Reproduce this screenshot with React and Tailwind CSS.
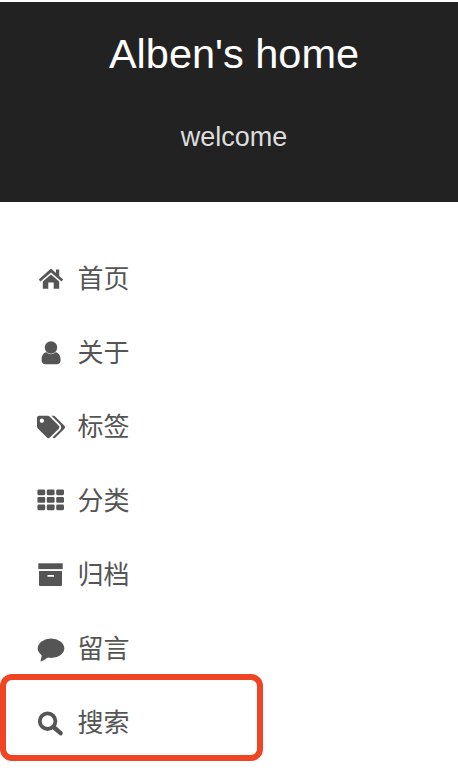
import React from "react";
import { FaTags } from "react-icons/fa";

// font-awesome 4 style icons, drawn in a 40x34 box
const HomeIcon = () => (
  <>
    <path d="M6.8 17.5 L19 6.6 L24 11 V7.6 H27.2 V14 L31.2 17.5 L29.6 19.4 L19 10.4 L8.4 19.4 Z" />
    <path d="M10.8 19.6 L19 12.4 L27.2 19.6 V26.8 H21.7 V20.5 H16.3 V26.8 H10.8 Z" />
  </>
);

const UserIcon = () => (
  <>
    <circle cx="19" cy="11.5" r="6.2" />
    <path d="M9.6 24 C9.6 19.5 11.5 16.8 14.3 16.3 C15.8 17.6 17.3 18.3 19 18.3 C20.7 18.3 22.2 17.6 23.7 16.3 C26.5 16.8 28.6 19.5 28.6 24 C28.6 27 27 28.2 25 28.2 H13.2 C11.2 28.2 9.6 27 9.6 24 Z" />
  </>
);

const ThIcon = () => (
  <>
    {[5.4, 14.8, 24.2].map((x) =>
      [5.4, 13, 20.4].map((y) => (
        <rect key={`${x}-${y}`} x={x} y={y} width="7.8" height="5.8" rx="1.4" />
      ))
    )}
  </>
);

const ArchiveIcon = () => (
  <>
    <rect x="6.3" y="5.3" width="24.4" height="5.8" />
    <path fillRule="evenodd" d="M7 13 H30 V27 Q30 28 29 28 H8 Q7 28 7 27 Z M15.5 17 V18.8 H22 V17 Z" />
  </>
);

const CommentIcon = () => (
  <>
    <ellipse cx="19" cy="16.3" rx="13.3" ry="9.7" />
    <path d="M10 22 L8.5 29.8 Q12.5 28 16.5 25 Z" />
  </>
);

const SearchIcon = () => (
  <>
    <circle cx="15.6" cy="15.2" r="7.8" fill="none" stroke="currentColor" strokeWidth="3.8" />
    <path d="M21.5 21 L28.6 27.2" fill="none" stroke="currentColor" strokeWidth="4.4" strokeLinecap="round" />
  </>
);

const TagsIcon = () => (
  <span className="w-[40px] h-[34px] pl-[5px] flex items-center text-[28px]">
    <FaTags />
  </span>
);

const menu = [
  { label: "首页", icon: <HomeIcon /> },
  { label: "关于", icon: <UserIcon /> },
  { label: "标签", custom: <TagsIcon /> },
  { label: "分类", icon: <ThIcon /> },
  { label: "归档", icon: <ArchiveIcon /> },
  { label: "留言", icon: <CommentIcon /> },
  { label: "搜索", icon: <SearchIcon /> },
];

export default function App() {
  return (
    <div className="relative w-[458px] h-[778px] overflow-hidden bg-white pt-[2px] font-['Liberation_Sans','Noto_Sans_CJK_SC',sans-serif]">
      <header className="h-[200px] bg-[#222222] pl-[10px] flex flex-col items-center">
        <h1 className="mt-[28px] text-[41.5px] leading-[48px] text-white">Alben's home</h1>
        <p className="mt-[44px] text-[27px] leading-[30px] text-[#dddddd]">welcome</p>
      </header>

      <ul className="pt-[40px] pl-[32px]">
        {menu.map(({ label, icon, custom }) => (
          <li key={label} className="h-[74px] flex items-center text-[#555555]">
            {custom || (
              <svg viewBox="0 0 40 34" fill="currentColor" className="w-[40px] h-[34px]">
                {icon}
              </svg>
            )}
            <span className="ml-[5.5px] text-[26px] leading-none">{label}</span>
          </li>
        ))}
      </ul>

      {/* red highlight over the last row */}
      <div className="absolute left-0 top-[674px] w-[263px] h-[87px] rounded-[12px] border-[6px] border-[#f04524]" />
    </div>
  );
}
